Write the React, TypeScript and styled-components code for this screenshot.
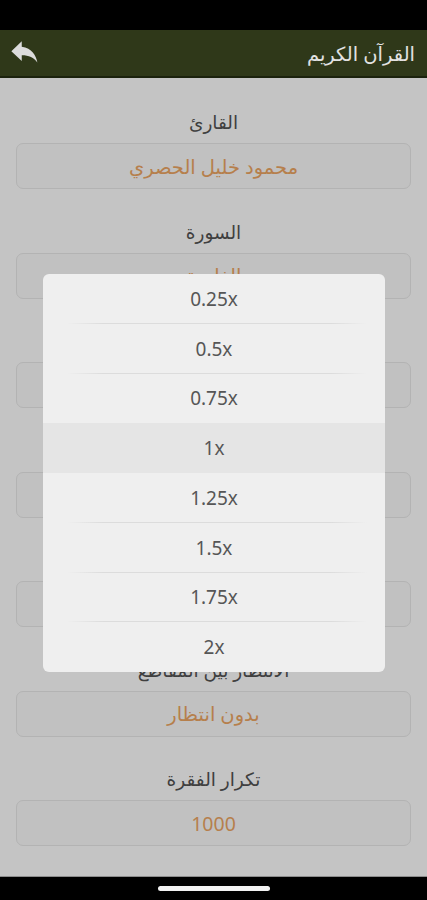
import React from "react";
import styled, { createGlobalStyle } from "styled-components";

const Global = createGlobalStyle`
  html, body { margin: 0; padding: 0; background: #000; }
  body { font-family: "Noto Sans", "DejaVu Sans", sans-serif; }
  * { box-sizing: border-box; }
`;

const Screen = styled.div`
  width: 427px;
  height: 900px;
  display: flex;
  flex-direction: column;
  background: #000;
  overflow: hidden;
`;

const StatusBar = styled.div`
  height: 30px;
  flex: none;
  background: #000;
`;

const Header = styled.header`
  height: 48px;
  flex: none;
  background: #2f3819;
  border-bottom: 2px solid #1b220d;
  display: flex;
  align-items: center;
  justify-content: space-between;
  padding: 0 12px 0 9px;
`;

const BackButton = styled.button`
  border: 0;
  background: none;
  padding: 0;
  width: 32px;
  height: 26px;
  display: flex;
  align-items: center;
  justify-content: center;
  color: #dcdcdc;
`;

const Title = styled.h1`
  margin: 0;
  font-size: 19.5px;
  font-weight: 400;
  color: #e2e2e2;
  direction: rtl;
`;

const Main = styled.main`
  position: relative;
  flex: 1;
  background: #c4c4c4;
  border-bottom: 1px solid #8c8c8c;
  padding: 32px 16px 0;
  display: flex;
  flex-direction: column;
  gap: 30.5px;
`;

const Group = styled.div`
  display: flex;
  flex-direction: column;
  gap: 9px;
`;

const Label = styled.div`
  height: 24px;
  line-height: 24px;
  text-align: center;
  font-size: 18.5px;
  color: #3f3f3f;
  direction: rtl;
`;

const Field = styled.div`
  height: 46px;
  border: 1px solid #b3b3b3;
  border-radius: 7px;
  background: #c1c1c1;
  display: flex;
  align-items: center;
  justify-content: center;
  font-size: 19.5px;
  color: #b67f4c;
  direction: rtl;
`;

const Menu = styled.div`
  position: absolute;
  left: 43px;
  top: 196px;
  width: 342px;
  background: #efefef;
  border-radius: 6px;
  overflow: hidden;
  display: flex;
  flex-direction: column;
`;

const Item = styled.div<{ $active?: boolean; $last?: boolean }>`
  position: relative;
  height: 49.75px;
  display: flex;
  align-items: center;
  justify-content: center;
  font-size: 19px;
  color: #565656;
  background: ${(p) => (p.$active ? "#e5e5e5" : "transparent")};
  &::after {
    content: "";
    display: ${(p) => (p.$last || p.$active ? "none" : "block")};
    position: absolute;
    left: 24px;
    right: 18px;
    bottom: 0;
    height: 1px;
    background: linear-gradient(
      to right,
      rgba(220, 220, 220, 0),
      #dcdcdc 12%,
      #dcdcdc 88%,
      rgba(220, 220, 220, 0)
    );
  }
`;

const BottomBar = styled.div`
  height: 23px;
  flex: none;
  background: #000;
  display: flex;
  justify-content: center;
  padding-top: 9px;
`;

const HomeIndicator = styled.div`
  width: 112px;
  height: 5px;
  border-radius: 3px;
  background: #f2f2f2;
`;

const fields = [
  { label: "القارئ", value: "محمود خليل الحصري" },
  { label: "السورة", value: "الفاتحة" },
  { label: "من الآية", value: "1" },
  { label: "إلى الآية", value: "7" },
  { label: "سرعة التلاوة", value: "1x" },
  { label: "الانتظار بين المقاطع", value: "بدون انتظار" },
  { label: "تكرار الفقرة", value: "1000" },
];

const speeds = ["0.25x", "0.5x", "0.75x", "1x", "1.25x", "1.5x", "1.75x", "2x"];

export default function App() {
  return (
    <Screen>
      <Global />
      <StatusBar />
      <Header>
        <BackButton aria-label="رجوع">
          <svg width="32" height="26" viewBox="0 0 24 20" fill="currentColor">
            <path d="M9.5 5.2V1L1.5 8.6l8 7.6v-4.5c5.6 0 9.3 1.7 12 5.6-1-5.6-4.2-11-12-12.1z" />
          </svg>
        </BackButton>
        <Title>القرآن الكريم</Title>
      </Header>
      <Main>
        {fields.map((f) => (
          <Group key={f.label}>
            <Label>{f.label}</Label>
            <Field>{f.value}</Field>
          </Group>
        ))}
        <Menu>
          {speeds.map((s, i) => (
            <Item
              key={s}
              $active={s === "1x"}
              $last={i === speeds.length - 1 || speeds[i + 1] === "1x"}
            >
              {s}
            </Item>
          ))}
        </Menu>
      </Main>
      <BottomBar>
        <HomeIndicator />
      </BottomBar>
    </Screen>
  );
}
